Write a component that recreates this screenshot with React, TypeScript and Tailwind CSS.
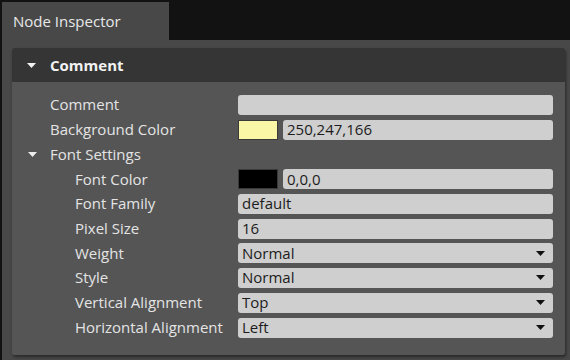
import React from "react";

type Row = {
  label: string;
  indent?: boolean;
  kind: "text" | "color" | "select" | "group";
  value?: string;
  swatch?: string;
  h: string;
};

const rows: Row[] = [
  { label: "Comment", kind: "text", value: "", h: "h-[25px]" },
  { label: "Background Color", kind: "color", value: "250,247,166", swatch: "bg-[#faf7a6]", h: "h-[25px]" },
  { label: "Font Settings", kind: "group", h: "h-[25px]" },
  { label: "Font Color", indent: true, kind: "color", value: "0,0,0", swatch: "bg-[#000000]", h: "h-[24px]" },
  { label: "Font Family", indent: true, kind: "text", value: "default", h: "h-[25px]" },
  { label: "Pixel Size", indent: true, kind: "text", value: "16", h: "h-[25px]" },
  { label: "Weight", indent: true, kind: "select", value: "Normal", h: "h-[24px]" },
  { label: "Style", indent: true, kind: "select", value: "Normal", h: "h-[25px]" },
  { label: "Vertical Alignment", indent: true, kind: "select", value: "Top", h: "h-[25px]" },
  { label: "Horizontal Alignment", indent: true, kind: "select", value: "Left", h: "h-[25px]" },
];

function Caret({ className }: { className: string }) {
  return (
    <svg width="9" height="5" viewBox="0 0 9 5" className={className}>
      <path d="M0 0 L9 0 L4.5 5 Z" fill="currentColor" />
    </svg>
  );
}

function Field({ row }: { row: Row }) {
  if (row.kind === "group") return <div className="flex-1" />;
  if (row.kind === "color") {
    return (
      <div className="flex w-[315px] gap-[5px]">
        <div className={`h-[20px] w-[40px] border border-[#3a3a3a] ${row.swatch}`} />
        <div className="flex h-[20px] flex-1 items-center rounded-[3px] bg-[#cfcfcf] px-[4px] text-[15px] text-[#1c1c1c]">
          {row.value}
        </div>
      </div>
    );
  }
  return (
    <div className="flex h-[20px] w-[315px] items-center rounded-[3px] bg-[#cfcfcf] pl-[4px] pr-[8px] text-[15px] text-[#1c1c1c]">
      <span className="flex-1">{row.value}</span>
      {row.kind === "select" && <Caret className="text-[#111111]" />}
    </div>
  );
}

export default function App() {
  return (
    <div className="flex h-[360px] w-[570px] flex-col overflow-hidden bg-[#121212] font-['Open_Sans',sans-serif]">
      {/* Tab strip */}
      <div className="flex h-[40px] shrink-0">
        <div className="ml-[2px] mt-[2px] flex h-[38px] w-[167px] items-center bg-[#484848] pl-[11px] text-[15px] text-[#e8e8e8]">
          Node Inspector
        </div>
      </div>

      {/* Dock body */}
      <div className="ml-[2px] flex flex-1 flex-col bg-[#484848] pb-[5px] pl-[10px] pr-[5px] pt-[8px]">
        <div className="flex flex-1 flex-col overflow-hidden rounded-[3px] shadow-[1px_2px_3px_rgba(0,0,0,0.45)]">
          {/* Section header */}
          <div className="flex h-[34px] shrink-0 items-center bg-[#353535] pl-[15px] text-[15px] font-bold text-[#f2f2f2]">
            <Caret className="mr-[14px] text-[#f2f2f2]" />
            Comment
          </div>

          {/* Properties */}
          <div className="flex flex-1 flex-col bg-[#555555] pr-[12px] pt-[10px]">
            {rows.map((row) => (
              <div key={row.label} className={`flex items-center ${row.h}`}>
                <div
                  className={`flex w-[226px] items-center text-[15px] text-[#e4e4e4] ${
                    row.indent ? "pl-[63px]" : "pl-[38px]"
                  }`}
                >
                  {row.kind === "group" && (
                    <Caret className="-ml-[22px] mr-[13px] text-[#eeeeee]" />
                  )}
                  {row.label}
                </div>
                <Field row={row} />
              </div>
            ))}
          </div>
        </div>
      </div>
    </div>
  );
}
